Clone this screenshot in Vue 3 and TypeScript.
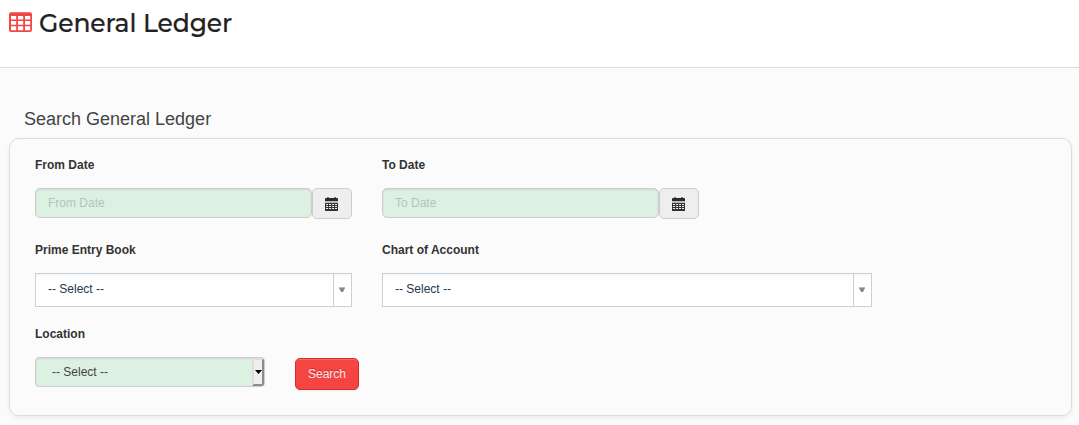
<script setup lang="ts">
import { ref } from 'vue'

interface DateField {
  id: string
  label: string
}

interface Picker {
  id: string
  label: string
  wide: boolean
}

const dates: DateField[] = [
  { id: 'from', label: 'From Date' },
  { id: 'to', label: 'To Date' },
]
const pickers: Picker[] = [
  { id: 'book', label: 'Prime Entry Book', wide: false },
  { id: 'account', label: 'Chart of Account', wide: true },
]
const values = ref<Record<string, string>>({ from: '', to: '' })
</script>

<template>
  <div class="page">
    <header class="top">
      <svg class="table-icon" width="23" height="20" viewBox="0 0 23 20">
        <path
          fill="#f34541"
          fill-rule="evenodd"
          d="M2 0.2H21Q23 0.2 23 2.2V18Q23 20 21 20H2Q0 20 0 18V2.2Q0 0.2 2 0.2ZM2 4V7.5H7.2V4ZM9 4V7.5H14.2V4ZM16 4V7.5H21.2V4ZM2 9V12.8H7.2V9ZM9 9V12.8H14.2V9ZM16 9V12.8H21.2V9ZM2 14.3V18.2H7.2V14.3ZM9 14.3V18.2H14.2V14.3ZM16 14.3V18.2H21.2V14.3Z"
        />
      </svg>
      <h1>General Ledger</h1>
    </header>

    <main>
      <h2>Search General Ledger</h2>
      <form class="panel" @submit.prevent>
        <div class="row">
          <div v-for="d in dates" :key="d.id" class="field">
            <label :for="d.id">{{ d.label }}</label>
            <div class="date">
              <input :id="d.id" v-model="values[d.id]" type="text" :placeholder="d.label" />
              <button type="button" class="cal" :aria-label="d.label">
                <svg width="13" height="14" viewBox="0 0 13 14">
                  <path fill="#777" d="M2 0H4V1H2ZM9 0H11V1H9Z" />
                  <path fill="#2b2b2b" d="M1 1H12Q13 1 13 2V4.5H0V2Q0 1 1 1Z" />
                  <path fill="#bdbdbd" d="M0 4H13V6H0Z" />
                  <path
                    fill="#333"
                    fill-rule="evenodd"
                    d="M0 6H13V14H0ZM1 7V8H3V7ZM4 7V8H6V7ZM7 7V8H9V7ZM10 7V8H12V7ZM1 9V10H3V9ZM4 9V10H6V9ZM7 9V10H9V9ZM10 9V10H12V9ZM1 11V12H3V11ZM4 11V12H6V11ZM7 11V12H9V11ZM10 11V12H12V11Z"
                  />
                </svg>
              </button>
            </div>
          </div>
        </div>

        <div class="row middle">
          <div v-for="p in pickers" :key="p.id" class="field" :class="{ wide: p.wide }">
            <label>{{ p.label }}</label>
            <div class="picker">
              <span class="value">-- Select --</span>
              <span class="arrow">
                <svg width="6" height="6" viewBox="0 0 6 6">
                  <path fill="#bbb" d="M0 0H6V1H0Z" />
                  <path fill="#888" d="M0 1H6L4 5H2Z" />
                </svg>
              </span>
            </div>
          </div>
        </div>

        <div class="row last">
          <div class="field location">
            <label>Location</label>
            <div class="native">
              <span class="value">-- Select --</span>
              <span class="drop">
                <svg width="7" height="4" viewBox="0 0 7 4"><path fill="#000" d="M0 0H7L3.5 4Z" /></svg>
              </span>
            </div>
          </div>
          <button type="submit" class="search">Search</button>
        </div>
      </form>
    </main>
  </div>
</template>

<style>
body {
  margin: 0;
  background: #fbfbfb;
}
</style>

<style scoped>
* {
  box-sizing: border-box;
}
.page {
  height: 425px;
  overflow: hidden;
  background: #fbfbfb;
  color: #333;
  font: 12px/20px "Liberation Sans", Arial, sans-serif;
}
.top {
  display: flex;
  align-items: flex-start;
  height: 68px;
  padding: 12px 9px 0;
  border-bottom: 1px solid #ddd;
  background: #fff;
}
.table-icon {
  flex: none;
}
h1 {
  margin: -5px 0 0 7px;
  color: #222;
  font: 500 25px/32px Montserrat, Inter, sans-serif;
  letter-spacing: -0.1px;
  white-space: nowrap;
  -webkit-text-stroke: 0.2px #222;
}
main {
  padding: 40px 7px 0 9px;
}
h2 {
  margin: 0 0 0 15px;
  color: #444;
  font-size: 18px;
  font-weight: 400;
  line-height: 22px;
}
.panel {
  height: 278px;
  margin-top: 8px;
  padding: 16px 25px 0;
  border: 1px solid #ddd;
  border-radius: 10px;
  box-shadow: 0 2px 5px rgba(0, 0, 0, 0.06);
}
.row {
  display: flex;
  gap: 30px;
  height: 85px;
}
.middle {
  height: 84px;
}
.field {
  width: 317px;
}
.wide {
  width: 490px;
}
.location {
  width: 230px;
}
label {
  display: block;
  height: 33px;
  font-weight: 700;
}
.date {
  display: flex;
}
input {
  width: 277px;
  height: 30px;
  padding: 0 12px;
  border: 1px solid #ccc;
  border-radius: 5px;
  outline: 0;
  background: #ddf1e2;
  box-shadow: inset 0 1px 2px rgba(0, 0, 0, 0.09);
  color: #444;
  font: inherit;
}
input::placeholder {
  color: #b7c3ba;
  opacity: 1;
}
.cal {
  display: flex;
  justify-content: center;
  width: 40px;
  height: 31px;
  padding: 8px 1px 0 0;
  border: 1px solid #ccc;
  border-radius: 5px;
  background: #eee;
}
.picker {
  display: flex;
  justify-content: space-between;
  height: 34px;
  border: 1px solid #c9d0d6;
  background: linear-gradient(#f5f6f6 0, #fff 3px);
  color: #24384f;
}
.picker .value {
  padding: 5px 12px;
}
.arrow {
  display: flex;
  width: 18px;
  padding: 13px 0 0 5px;
  border-left: 1px solid #c9d0d6;
}
.native {
  display: flex;
  justify-content: space-between;
  height: 30px;
  overflow: hidden;
  border: 1px solid #ccc;
  border-radius: 4px;
  background: #ddf1e2;
  box-shadow: inset 0 1px 2px rgba(0, 0, 0, 0.09);
  color: #444;
}
.native .value {
  padding: 4px 16px;
}
.drop {
  display: flex;
  align-items: center;
  justify-content: center;
  width: 12px;
  border: 2px solid;
  border-color: #ddd #8c8c8c #8c8c8c #ddd;
  background: #efefef;
}
.drop svg {
  flex: none;
}
.search {
  width: 64px;
  height: 32px;
  margin-top: 34px;
  padding: 0;
  border: 1px solid #d02f2d;
  border-radius: 5px;
  background: #f54542;
  box-shadow: inset 0 1px 0 rgba(255, 255, 255, 0.2), 0 1px 2px rgba(0, 0, 0, 0.05);
  color: #ffeaea;
  font: inherit;
  text-shadow: 0 -1px 0 rgba(0, 0, 0, 0.25);
}
</style>
